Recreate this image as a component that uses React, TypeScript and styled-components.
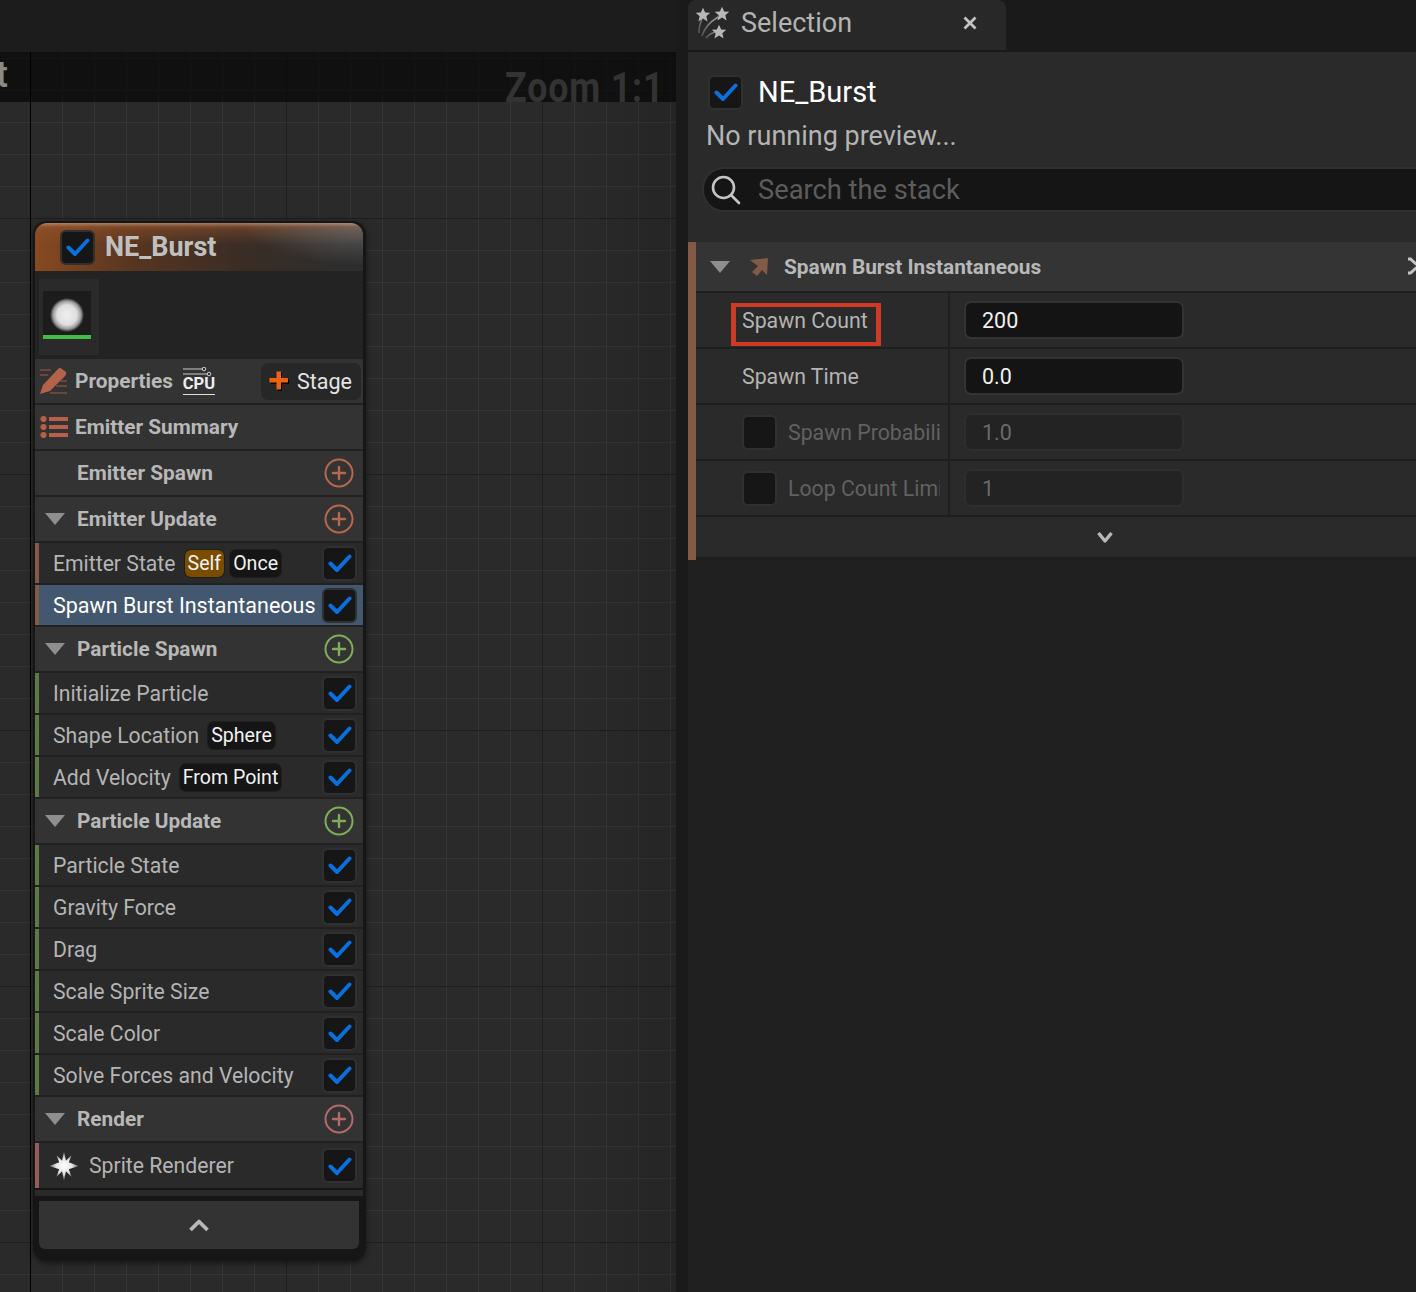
import React from "react";
import styled, { createGlobalStyle } from "styled-components";

const GlobalStyle = createGlobalStyle`
  html, body { margin: 0; padding: 0; background: #1a1a1a; }
  body { font-family: Roboto, "Liberation Sans", sans-serif; }
`;

const Page = styled.div`
  width: 1416px;
  height: 1292px;
  overflow: hidden;
  display: grid;
  grid-template-columns: 676px 12px 1fr;
  background: #1c1c1c;
`;

const GraphColumn = styled.div`
  display: flex;
  flex-direction: column;
`;

const TopStrip = styled.div`
  height: 52px;
  background: #1c1c1c;
`;

const Canvas = styled.div`
  position: relative;
  flex: 1;
  overflow: hidden;
  background-color: #2a2a2a;
  background-image:
    linear-gradient(to right, transparent 85%, rgba(0, 0, 0, 0.12)),
    linear-gradient(to right, #000 0, #000 1px, transparent 1px),
    linear-gradient(to right, #1e1e1e 0, #1e1e1e 1px, transparent 1px),
    linear-gradient(to bottom, #1e1e1e 0, #1e1e1e 1px, transparent 1px),
    linear-gradient(to right, #353535 0, #353535 1px, transparent 1px),
    linear-gradient(to bottom, #353535 0, #353535 1px, transparent 1px);
  background-size: 100% 100%, 1px 100%, 256px 256px, 256px 256px, 32px 32px, 32px 32px;
  background-repeat: no-repeat, no-repeat, repeat, repeat, repeat, repeat;
  background-position: 0 0, 30px 0, 30px 166px, 30px 166px, 30px 6px, 30px 6px;
`;

const ZoomBand = styled.div`
  position: absolute;
  inset: 0 0 auto 0;
  height: 50px;
  background: rgba(0, 0, 0, 0.6);
  display: flex;
  justify-content: space-between;
  align-items: flex-end;
  overflow: hidden;
`;

const ClippedTitle = styled.span`
  margin-left: -4px;
  margin-bottom: 9px;
  font-size: 36px;
  font-weight: 500;
  color: #8a8a8a;
  line-height: 1;
`;

const ZoomLabel = styled.span`
  font-family: Roboto, sans-serif;
  font-weight: 700;
  font-size: 42px;
  line-height: 1;
  color: #333;
  margin-right: 12px;
  margin-bottom: -7px;
  letter-spacing: 1px;
  transform: scaleX(0.85);
  transform-origin: right center;
`;

const Node = styled.div`
  position: absolute;
  left: 33px;
  top: 169px;
  width: 333px;
  height: 1040px;
  box-sizing: border-box;
  padding: 2px 3px 0 2px;
  background: #161616;
  border-radius: 14px;
  box-shadow: 0 2px 6px rgba(0, 0, 0, 0.5);
  display: flex;
  flex-direction: column;
`;

const NodeHeader = styled.div`
  height: 48px;
  flex: none;
  box-sizing: border-box;
  padding-left: 25px;
  display: flex;
  align-items: center;
  gap: 10px;
  border-radius: 12px 12px 0 0;
  background:
    linear-gradient(to bottom, rgba(210, 180, 160, 0.5) 0, rgba(150, 90, 50, 0.3) 8%, transparent 14%),
    radial-gradient(ellipse 120px 42px at 100% 0, rgba(125, 125, 125, 0.6), transparent),
    linear-gradient(to bottom, rgba(150, 85, 45, 0.55) 0, transparent 45%),
    linear-gradient(to right, rgba(140, 75, 32, 0.95) 0, rgba(100, 56, 28, 0.75) 30%, rgba(70, 45, 30, 0.55) 62%, transparent 95%),
    #2d2d2d;
  font-size: 27px;
  font-weight: 700;
  color: #c0c0c0;
`;

const ThumbArea = styled.div`
  height: 87px;
  flex: none;
  box-sizing: border-box;
  padding: 8px 4px;
  background: #222322;
`;

const ThumbCard = styled.div`
  width: 60px;
  height: 76px;
  box-sizing: border-box;
  padding: 12px 4px 0;
  background: #2a2a2a;
`;

const Thumb = styled.div`
  position: relative;
  width: 48px;
  height: 48px;
  background:
    radial-gradient(circle at 24px 24px, #f0f0f0 0, #dedede 10px, #9a9a9a 14px, #1c1c1c 17px);
  &::after {
    content: "";
    position: absolute;
    left: 0;
    right: 0;
    bottom: 0;
    height: 4px;
    background: #44bb44;
  }
`;

const Stack = styled.div`
  display: flex;
  flex-direction: column;
  gap: 2px;
  padding-top: 1px;
  background: #212121;
`;

const SectionRow = styled.div`
  height: 44px;
  box-sizing: border-box;
  padding: 0 9px 0 10px;
  display: flex;
  align-items: center;
  background: #333;
  color: #b8b8b8;
  font-size: 20.8px;
  font-weight: 700;
`;

const PropertiesRow = styled(SectionRow)`
  padding: 0 2px 0 3px;
`;

const RowIcon = styled.span`
  width: 32px;
  height: 32px;
  margin-right: 5px;
  display: flex;
  align-items: center;
  justify-content: center;
`;

const CpuBadge = styled.span`
  margin-left: 10px;
  width: 32px;
  display: flex;
  flex-direction: column;
  align-items: center;
  color: #eee;
  font-size: 16.5px;
  line-height: 14px;
  font-weight: 700;
`;

const CpuLines = styled.svg`
  display: block;
`;

const CpuUnderline = styled.span`
  width: 32px;
  height: 1px;
  margin-top: 3px;
  background: #ddd;
`;

const StageButton = styled.div`
  margin-left: auto;
  width: 100px;
  height: 37px;
  box-sizing: border-box;
  padding-left: 8px;
  display: flex;
  align-items: center;
  gap: 7px;
  border-radius: 7px;
  background: #272727;
  color: #e4e4e4;
  font-size: 21.5px;
  font-weight: 400;
`;

const Caret = styled.span`
  width: 0;
  height: 0;
  margin-right: 12px;
  border-left: 10px solid transparent;
  border-right: 10px solid transparent;
  border-top: 12px solid #8e8e8e;
`;

const SectionName = styled.span<{ $indent?: boolean }>`
  margin-left: ${(p) => (p.$indent ? "32px" : "0")};
`;

const AddButton = styled.span`
  margin-left: auto;
  display: flex;
`;

const ItemRow = styled.div<{ $stripe: string; $selected?: boolean }>`
  height: 40px;
  box-sizing: border-box;
  padding: 0 6px 0 14px;
  display: flex;
  align-items: center;
  border-left: 4px solid ${(p) => p.$stripe};
  background: ${(p) => (p.$selected ? "#43586e" : "#2a2a2a")};
  color: ${(p) => (p.$selected ? "#fff" : "#b4b4b4")};
  font-size: ${(p) => (p.$selected ? "21.5px" : "21.2px")};
`;

const TallItemRow = styled(ItemRow)`
  height: 45px;
  padding-left: 9px;
`;

const SparkIcon = styled.span`
  width: 32px;
  margin-right: 9px;
  display: flex;
  justify-content: center;
`;

const ItemName = styled.span`
  white-space: nowrap;
`;

const Tag = styled.span<{ $accent?: boolean }>`
  margin-left: 9px;
  height: 27px;
  padding: 0 3px;
  display: flex;
  align-items: center;
  border-radius: 6px;
  background: ${(p) => (p.$accent ? "#7a4c00" : "#151515")};
  box-shadow: 0 0 0 1px #1e1e1e;
  color: #f2f2f2;
  font-size: 19.6px;
  & + & {
    margin-left: 6px;
  }
`;

const Tags = styled.span`
  display: flex;
`;

const Check = styled.span`
  flex: none;
  width: 35px;
  height: 35px;
  box-sizing: border-box;
  display: flex;
  align-items: center;
  justify-content: center;
  border-radius: 6px;
  background: #161616;
  border: 2px solid #303030;
`;

const ItemCheck = styled(Check)`
  margin-left: auto;
`;

const CollapseWrap = styled.div`
  margin-top: 2px;
  height: 6px;
  background: #2a2a2a;
  flex: none;
`;

const CollapseBar = styled.div`
  flex: none;
  margin: 5px 4px 0 4px;
  height: 48px;
  display: flex;
  align-items: center;
  justify-content: center;
  border-radius: 0 0 6px 6px;
  background: #333;
`;

const Divider = styled.div`
  background: #1a1a1a;
`;

const RightColumn = styled.div`
  display: flex;
  flex-direction: column;
  min-width: 0;
`;

const TabBar = styled.div`
  height: 52px;
  flex: none;
  background: #1a1a1a;
`;

const Tab = styled.div`
  width: 318px;
  height: 50px;
  box-sizing: border-box;
  padding: 0 29px 4px 8px;
  display: flex;
  align-items: center;
  border-radius: 8px 8px 0 0;
  background: #282828;
  color: #b4b4b4;
  font-size: 27px;
`;

const TabTitle = styled.span`
  margin-left: 11px;
`;

const TabClose = styled.span`
  margin-left: auto;
  display: flex;
`;

const PanelTop = styled.div`
  height: 190px;
  flex: none;
  box-sizing: border-box;
  padding: 22px 0 0 18px;
  background: #2a2a2a;
`;

const EmitterLine = styled.div`
  height: 36px;
  display: flex;
  align-items: center;
  gap: 15px;
  margin-left: 2px;
  color: #fff;
  font-size: 29px;
`;

const PreviewNote = styled.div`
  margin-top: 8px;
  height: 36px;
  line-height: 36px;
  color: #b4b4b4;
  font-size: 27px;
`;

const SearchBox = styled.div`
  margin: 13px 0 0 -4px;
  height: 45px;
  box-sizing: border-box;
  padding-left: 6px;
  display: flex;
  align-items: center;
  gap: 16px;
  border-radius: 22px 0 0 22px;
  background: #151515;
  border: 2px solid #303030;
  border-right: none;
  color: #5c5c5c;
  font-size: 27.3px;
`;

const ModulePanel = styled.div`
  flex: 1;
  background: #202020;
`;

const Module = styled.div`
  height: 318px;
  border-left: 8px solid #825a46;
  display: flex;
  flex-direction: column;
  background: #1e1e1e;
  gap: 2px;
`;

const ModuleHeader = styled.div`
  position: relative;
  height: 49px;
  flex: none;
  box-sizing: border-box;
  padding-left: 14px;
  display: flex;
  align-items: center;
  background: #343434;
  color: #b8b8b8;
  font-size: 20.85px;
  font-weight: 700;
`;

const ModuleCaret = styled(Caret)`
  margin-right: 18px;
`;

const ModuleTitle = styled.span`
  margin-left: 14px;
`;

const ClippedIcon = styled.span`
  position: absolute;
  right: 0;
  top: 15px;
  display: flex;
`;

const ParamRow = styled.div`
  height: 54px;
  flex: none;
  display: grid;
  grid-template-columns: 252px 1fr;
  gap: 2px;
`;

const ParamName = styled.div<{ $disabled?: boolean }>`
  padding-left: 46px;
  display: flex;
  align-items: center;
  gap: 11px;
  overflow: hidden;
  background: #2a2a2a;
  color: ${(p) => (p.$disabled ? "#616161" : "#b4b4b4")};
  font-size: 21.3px;
  white-space: nowrap;
`;

const ClippedName = styled.span`
  width: 152px;
  overflow: hidden;
`;

const Highlight = styled.span`
  margin: 9px 0 0 -11px;
  height: 43px;
  box-sizing: border-box;
  padding: 0 8px 8px 6px;
  display: flex;
  align-items: center;
  border: 4px solid #d03a22;
  border-width: 4px 5px;
`;

const ParamValue = styled.div`
  padding: 8px 0 0 14px;
  background: #2a2a2a;
`;

const ValueField = styled.div<{ $disabled?: boolean }>`
  width: 220px;
  height: 38px;
  box-sizing: border-box;
  padding-left: 16px;
  display: flex;
  align-items: center;
  border-radius: 7px;
  background: ${(p) => (p.$disabled ? "#232323" : "#141414")};
  border: 2px solid ${(p) => (p.$disabled ? "#2e2e2e" : "#333")};
  color: ${(p) => (p.$disabled ? "#6a6a6a" : "#f0f0f0")};
  font-size: 21.5px;
`;

const ModuleFooter = styled.div`
  height: 40px;
  flex: none;
  display: flex;
  align-items: center;
  justify-content: center;
  padding-left: 98px;
  background: #2a2a2a;
`;

const CheckMark = () => (
  <svg width="24" height="20" viewBox="0 0 24 20">
    <path d="M2.5 10.5 L9 17 L21.5 3.5" fill="none" stroke="#0a70e0" strokeWidth="4" strokeLinecap="round" strokeLinejoin="round" />
  </svg>
);

const Plus = ({ color }: { color: string }) => (
  <svg width="30" height="30" viewBox="0 0 30 30">
    <circle cx="15" cy="15" r="13.5" fill="none" stroke={color} strokeWidth="2" />
    <path d="M15 9 V21 M9 15 H21" stroke={color} strokeWidth="2.4" strokeLinecap="round" />
  </svg>
);

const ChevronUp = () => (
  <svg width="20" height="14" viewBox="0 0 20 14">
    <path d="M1.5 12 L10 3.5 L18.5 12" fill="none" stroke="#b8b8b8" strokeWidth="3.8" strokeLinejoin="round" />
  </svg>
);

const ChevronDown = () => (
  <svg width="16" height="13" viewBox="0 0 16 13">
    <path d="M1.5 2 L8 10 L14.5 2" fill="none" stroke="#b8b8b8" strokeWidth="3.4" strokeLinejoin="round" />
  </svg>
);

const ClippedChevron = () => (
  <svg width="8" height="18" viewBox="0 0 8 18">
    <path d="M0 2 H2.5 L8.5 7.5 M0 16 H2.5 L8.5 10.5" fill="none" stroke="#c4c4c4" strokeWidth="3" />
  </svg>
);

const PencilIcon = () => (
  <svg width="30" height="30" viewBox="0 0 30 30">
    <path d="M1 28 L4 19 L19 3 Q21 1 23 3 L27 6 Q28 8 26 10 L11 25 Z" fill="#b4624a" />
    <path d="M1 4 H12 M1 9 H9 M20 15 H28 M17 20 H28 M11 27 H28" stroke="#7d4f40" strokeWidth="1.4" />
  </svg>
);

const ListIcon = () => (
  <svg width="28" height="24" viewBox="0 0 28 24">
    <g fill="#b8614a">
      <circle cx="3.5" cy="4" r="3" />
      <circle cx="3.5" cy="12" r="3" />
      <circle cx="3.5" cy="20" r="3" />
      <rect x="9" y="2" width="19" height="4" />
      <rect x="9" y="10" width="19" height="4" />
      <rect x="9" y="18" width="19" height="4" />
    </g>
  </svg>
);

const StarIcon = () => (
  <svg width="30" height="30" viewBox="0 0 28 28">
    <defs>
      <radialGradient id="spark">
        <stop offset="0" stopColor="#fff" />
        <stop offset="0.55" stopColor="#e4e4e4" />
        <stop offset="1" stopColor="#6a6a6a" />
      </radialGradient>
    </defs>
    <path
      d="M14 0.5 L15.8 9 L21 4 L18.5 10.5 L27.5 14 L18.5 17 L21 24 L15.8 19 L14 27.5 L12.2 19 L7 24 L9.5 17 L0.5 14 L9.5 10.5 L7 4 L12.2 9 Z"
      fill="url(#spark)"
    />
  </svg>
);

const FireworksIcon = () => {
  const star = "M0 -6 L1.8 -2 L6 -1.8 L2.8 1 L3.8 5.4 L0 3 L-3.8 5.4 L-2.8 1 L-6 -1.8 L-1.8 -2 Z";
  return (
    <svg width="34" height="34" viewBox="0 0 34 34">
      <defs>
        <linearGradient id="trail" x1="0" y1="1" x2="1" y2="0">
          <stop offset="0" stopColor="#4a4a4a" />
          <stop offset="1" stopColor="#9a9a9a" />
        </linearGradient>
      </defs>
      <path d="M3 27 Q3 19 6 13 M6 30 Q9 19 22 11 M10 32 Q14 27 20 26" fill="none" stroke="url(#trail)" strokeWidth="1.6" />
      <g fill="#b8b8b8">
        <path d={star} transform="translate(7 9) scale(1.2)" />
        <path d={star} transform="translate(26 8) scale(1.2)" />
        <path d={star} transform="translate(23 26) scale(1.2)" />
      </g>
    </svg>
  );
};

const SearchIcon = () => (
  <svg width="32" height="32" viewBox="0 0 32 32">
    <circle cx="13.5" cy="13.5" r="10.5" fill="none" stroke="#c4c4c4" strokeWidth="2.6" />
    <path d="M21 21 L29 29" stroke="#c4c4c4" strokeWidth="2.6" strokeLinecap="round" />
  </svg>
);

const CloseIcon = () => (
  <svg width="14" height="14" viewBox="0 0 14 14">
    <path d="M1.5 1.5 L12.5 12.5 M12.5 1.5 L1.5 12.5" stroke="#c4c4c4" strokeWidth="2.8" />
  </svg>
);

const BurstArrow = () => (
  <svg width="22" height="20" viewBox="0 0 22 20">
    <path d="M2 3 L20 1 L19 18 L14 13 L9 19 L4 15 L10 9 Z" fill="#825a46" />
  </svg>
);

const StagePlus = () => (
  <svg width="21" height="21" viewBox="0 0 21 21">
    <path d="M8.5 2 H13 V8.5 H20 V13 H13 V20 H8.5 V13 H2 V8.5 H8.5 Z" fill="#000" />
    <path d="M7.5 0.5 H12 V7 H19 V11.5 H12 V18.5 H7.5 V11.5 H0.5 V7 H7.5 Z" fill="#f0600f" />
  </svg>
);

type Item = { name: string; tags?: { label: string; accent?: boolean }[]; selected?: boolean };

const Items = ({ items, stripe }: { items: Item[]; stripe: string }) => (
  <>
    {items.map((item) => (
      <ItemRow key={item.name} $stripe={stripe} $selected={item.selected}>
        <ItemName>{item.name}</ItemName>
        {item.tags && (
          <Tags>
            {item.tags.map((t) => (
              <Tag key={t.label} $accent={t.accent}>{t.label}</Tag>
            ))}
          </Tags>
        )}
        <ItemCheck><CheckMark /></ItemCheck>
      </ItemRow>
    ))}
  </>
);

const Section = ({ name, plus }: { name: string; plus: string }) => (
  <SectionRow>
    <Caret />
    <SectionName>{name}</SectionName>
    <AddButton><Plus color={plus} /></AddButton>
  </SectionRow>
);

const App: React.FC = () => {
  return (
    <Page>
      <GlobalStyle />
      <GraphColumn>
        <TopStrip />
        <Canvas>
          <ZoomBand>
            <ClippedTitle>t</ClippedTitle>
            <ZoomLabel>Zoom 1:1</ZoomLabel>
          </ZoomBand>
          <Node>
            <NodeHeader>
              <Check><CheckMark /></Check>
              <span>NE_Burst</span>
            </NodeHeader>
            <ThumbArea>
              <ThumbCard><Thumb /></ThumbCard>
            </ThumbArea>
            <Stack>
              <PropertiesRow>
                <RowIcon><PencilIcon /></RowIcon>
                <span>Properties</span>
                <CpuBadge>
                  <CpuLines width="32" height="10" viewBox="0 0 32 10">
                    <path d="M0 2 H20 M0 7 H25" stroke="#ccc" strokeWidth="1.2" />
                    <circle cx="21" cy="2" r="1.8" fill="none" stroke="#ccc" />
                    <circle cx="26" cy="7" r="1.8" fill="none" stroke="#ccc" />
                  </CpuLines>
                  CPU
                  <CpuUnderline />
                </CpuBadge>
                <StageButton><StagePlus />Stage</StageButton>
              </PropertiesRow>
              <PropertiesRow>
                <RowIcon><ListIcon /></RowIcon>
                <span>Emitter Summary</span>
              </PropertiesRow>
              <SectionRow>
                <SectionName $indent>Emitter Spawn</SectionName>
                <AddButton><Plus color="#b8674e" /></AddButton>
              </SectionRow>
              <Section name="Emitter Update" plus="#b8674e" />
              <Items
                stripe="#825a46"
                items={[
                  { name: "Emitter State", tags: [{ label: "Self", accent: true }, { label: "Once" }] },
                  { name: "Spawn Burst Instantaneous", selected: true },
                ]}
              />
              <Section name="Particle Spawn" plus="#7fae58" />
              <Items
                stripe="#5d7a45"
                items={[
                  { name: "Initialize Particle" },
                  { name: "Shape Location", tags: [{ label: "Sphere" }] },
                  { name: "Add Velocity", tags: [{ label: "From Point" }] },
                ]}
              />
              <Section name="Particle Update" plus="#7fae58" />
              <Items
                stripe="#5d7a45"
                items={[
                  { name: "Particle State" },
                  { name: "Gravity Force" },
                  { name: "Drag" },
                  { name: "Scale Sprite Size" },
                  { name: "Scale Color" },
                  { name: "Solve Forces and Velocity" },
                ]}
              />
              <Section name="Render" plus="#b56a6a" />
              <TallItemRow $stripe="#955a5a">
                <SparkIcon><StarIcon /></SparkIcon>
                <ItemName>Sprite Renderer</ItemName>
                <ItemCheck><CheckMark /></ItemCheck>
              </TallItemRow>
            </Stack>
            <CollapseWrap />
            <CollapseBar><ChevronUp /></CollapseBar>
          </Node>
        </Canvas>
      </GraphColumn>
      <Divider />
      <RightColumn>
        <TabBar>
          <Tab>
            <FireworksIcon />
            <TabTitle>Selection</TabTitle>
            <TabClose><CloseIcon /></TabClose>
          </Tab>
        </TabBar>
        <PanelTop>
          <EmitterLine>
            <Check><CheckMark /></Check>
            NE_Burst
          </EmitterLine>
          <PreviewNote>No running preview...</PreviewNote>
          <SearchBox><SearchIcon />Search the stack</SearchBox>
        </PanelTop>
        <ModulePanel>
          <Module>
            <ModuleHeader>
              <ModuleCaret />
              <BurstArrow />
              <ModuleTitle>Spawn Burst Instantaneous</ModuleTitle>
              <ClippedIcon><ClippedChevron /></ClippedIcon>
            </ModuleHeader>
            <ParamRow>
              <ParamName><Highlight>Spawn Count</Highlight></ParamName>
              <ParamValue><ValueField>200</ValueField></ParamValue>
            </ParamRow>
            <ParamRow>
              <ParamName>Spawn Time</ParamName>
              <ParamValue><ValueField>0.0</ValueField></ParamValue>
            </ParamRow>
            <ParamRow>
              <ParamName $disabled><Check /><ClippedName>Spawn Probability</ClippedName></ParamName>
              <ParamValue><ValueField $disabled>1.0</ValueField></ParamValue>
            </ParamRow>
            <ParamRow>
              <ParamName $disabled><Check /><ClippedName>Loop Count Limit</ClippedName></ParamName>
              <ParamValue><ValueField $disabled>1</ValueField></ParamValue>
            </ParamRow>
            <ModuleFooter><ChevronDown /></ModuleFooter>
          </Module>
        </ModulePanel>
      </RightColumn>
    </Page>
  );
};

export default App;
